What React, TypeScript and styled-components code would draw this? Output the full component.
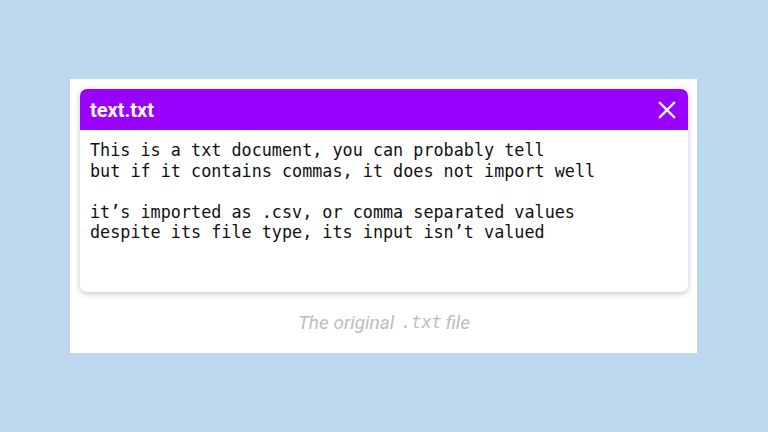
import React from "react";
import styled, { createGlobalStyle } from "styled-components";

const Global = createGlobalStyle`
  html, body { margin: 0; padding: 0; }
  body { background: #bdd8ee; width: 768px; height: 432px; overflow: hidden; font-family: Roboto, "Noto Sans", sans-serif; }
`;

const Stage = styled.div`
  width: 768px;
  height: 432px;
  padding: 79px 71px 0 70px;
  box-sizing: border-box;
`;

const Panel = styled.div`
  width: 627px;
  height: 274px;
  background: #ffffff;
  padding: 10px 9px 0 10px;
  box-sizing: border-box;
  display: flex;
  flex-direction: column;
`;

const Card = styled.div`
  height: 203px;
  border-radius: 7px;
  background: #fff;
  box-shadow: 0 2px 6px rgba(0, 0, 0, 0.22);
  overflow: hidden;
  display: flex;
  flex-direction: column;
`;

const Header = styled.div`
  height: 41px;
  background: #9900ff;
  display: flex;
  align-items: center;
  justify-content: space-between;
  padding: 0 10px 0 10px;
`;

const Title = styled.div`
  color: #fff;
  font-family: Roboto, sans-serif;
  font-weight: 700;
  font-size: 20px;
`;

const Close = styled.button`
  border: none;
  background: none;
  padding: 0;
  width: 22px;
  height: 22px;
  display: flex;
  align-items: center;
  justify-content: center;
  cursor: pointer;
`;

const Body = styled.pre`
  margin: 0;
  padding: 10px 10px;
  font-family: "DejaVu Sans Mono", monospace;
  font-size: 16.8px;
  line-height: 20.5px;
  color: #111;
  white-space: pre;
`;

const Caption = styled.div`
  flex: 1;
  display: flex;
  align-items: center;
  justify-content: center;
  color: #bdbdbd;
  font-style: italic;
  font-size: 19px;
  font-family: Roboto, sans-serif;
  padding-bottom: 1px;
`;

const Code = styled.span`
  font-family: "DejaVu Sans Mono", monospace;
  font-size: 16.8px;
  margin: 0 4px 0 7px;
`;

export default function App() {
  return (
    <>
      <Global />
      <Stage>
        <Panel>
          <Card>
            <Header>
              <Title>text.txt</Title>
              <Close aria-label="close">
                <svg width="18" height="18" viewBox="0 0 18 18">
                  <path d="M2 2 L16 16 M16 2 L2 16" stroke="#fff" strokeWidth="2.4" strokeLinecap="square" />
                </svg>
              </Close>
            </Header>
            <Body>{`This is a txt document, you can probably tell
but if it contains commas, it does not import well

it’s imported as .csv, or comma separated values
despite its file type, its input isn’t valued`}</Body>
          </Card>
          <Caption>
            The original<Code>.txt</Code>file
          </Caption>
        </Panel>
      </Stage>
    </>
  );
}
